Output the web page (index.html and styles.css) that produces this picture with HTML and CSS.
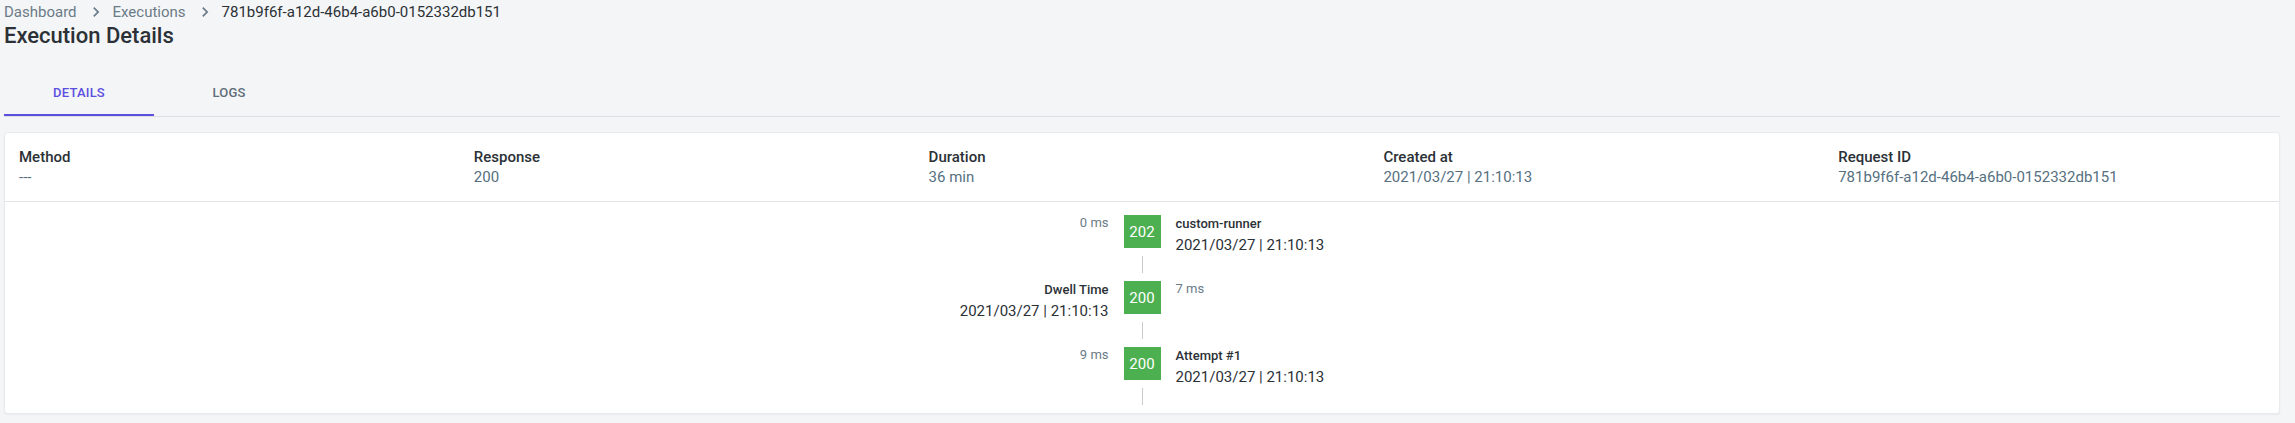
FILE: index.html
```html
<!DOCTYPE html>
<html lang="en">
<head>
<meta charset="utf-8">
<title>Execution Details</title>
<link rel="stylesheet" href="styles.css">
</head>
<body>
<div class="page">
  <nav class="crumbs">
    <span class="crumb">Dashboard</span>
    <svg class="chev" viewBox="0 0 24 24" width="20" height="20"><path d="M10 6 8.59 7.41 13.17 12l-4.58 4.59L10 18l6-6z" fill="currentColor"/></svg>
    <span class="crumb">Executions</span>
    <svg class="chev" viewBox="0 0 24 24" width="20" height="20"><path d="M10 6 8.59 7.41 13.17 12l-4.58 4.59L10 18l6-6z" fill="currentColor"/></svg>
    <span class="crumb current">781b9f6f-a12d-46b4-a6b0-0152332db151</span>
  </nav>
  <h1 class="title">Execution Details</h1>
  <div class="tabs">
    <div class="tab active">DETAILS</div>
    <div class="tab">LOGS</div>
  </div>
  <section class="card">
    <div class="summary">
      <div class="cell"><div class="label">Method</div><div class="value">---</div></div>
      <div class="cell"><div class="label">Response</div><div class="value">200</div></div>
      <div class="cell"><div class="label">Duration</div><div class="value">36 min</div></div>
      <div class="cell"><div class="label">Created at</div><div class="value">2021/03/27 | 21:10:13</div></div>
      <div class="cell"><div class="label">Request ID</div><div class="value">781b9f6f-a12d-46b4-a6b0-0152332db151</div></div>
    </div>
    <div class="timeline">
      <div class="side left"><div class="ms">0 ms</div></div>
      <div class="mid"><div class="code">202</div><div class="line"></div></div>
      <div class="side right"><div class="name">custom-runner</div><div class="date">2021/03/27 | 21:10:13</div></div>

      <div class="side left"><div class="name">Dwell Time</div><div class="date">2021/03/27 | 21:10:13</div></div>
      <div class="mid"><div class="code">200</div><div class="line"></div></div>
      <div class="side right"><div class="ms">7 ms</div></div>

      <div class="side left"><div class="ms">9 ms</div></div>
      <div class="mid"><div class="code">200</div><div class="line"></div></div>
      <div class="side right"><div class="name">Attempt #1</div><div class="date">2021/03/27 | 21:10:13</div></div>
    </div>
  </section>
</div>
</body>
</html>
```
FILE: styles.css
```css
html, body {
  margin: 0;
  background: #f4f5f7;
  font-family: Roboto, "Liberation Sans", sans-serif;
  color: #263238;
}
.page {
  padding: 0 15px 12px 4px;
}
.crumbs {
  display: flex;
  align-items: center;
  height: 24px;
  font-size: 15px;
  line-height: 24px;
}
.crumb { color: #6b7b87; }
.crumb.current { color: #2b3136; }
.chev {
  color: #6b7b87;
  margin: 0 7px 0 9px;
}
.title {
  margin: 0;
  font-size: 22px;
  line-height: 24px;
  font-weight: 500;
  color: #2b3136;
}
.tabs {
  display: flex;
  margin-top: 20px;
  border-bottom: 1px solid #dcdfe3;
}
.tab {
  width: 150px;
  height: 48px;
  box-sizing: border-box;
  display: flex;
  align-items: center;
  justify-content: center;
  font-size: 13px;
  font-weight: 500;
  color: #5e6e7a;
  letter-spacing: 0.2px;
}
.tab.active {
  color: #5b4fe0;
  border-bottom: 2px solid #5b4fe0;
  padding-top: 2px;
}
.card {
  margin-top: 15px;
  background: #fff;
  border: 1px solid #e8eaed;
  border-radius: 4px;
  box-shadow: 0 1px 2px rgba(0,0,0,0.05);
}
.summary {
  display: grid;
  grid-template-columns: repeat(5, 1fr);
  border-bottom: 1px solid #e2e4e7;
}
.cell {
  padding: 14px 14px 14px;
  font-size: 15px;
  line-height: 20px;
}
.label { color: #2b3136; font-weight: 500; }
.value { color: #56707f; }
.timeline {
  display: grid;
  grid-template-columns: 1fr auto 1fr;
  column-gap: 15px;
  padding-top: 13px;
}
.side {
  display: flex;
  flex-direction: column;
}
.side.left { align-items: flex-end; text-align: right; }
.side.right { align-items: flex-start; }
.mid {
  display: flex;
  flex-direction: column;
  align-items: center;
}
.code {
  width: 37px;
  height: 33px;
  background: #4caf50;
  color: #fff;
  font-size: 15px;
  display: flex;
  align-items: center;
  justify-content: center;
}
.line {
  width: 1px;
  height: 17px;
  margin: 8px 0;
  background: #c9cccf;
}
.ms {
  font-size: 13px;
  line-height: 15px;
  color: #6b7b87;
}
.name {
  font-size: 13px;
  font-weight: 500;
  line-height: 18px;
  color: #2b3136;
}
.date {
  font-size: 15px;
  line-height: 24px;
  color: #2b3136;
}
```
